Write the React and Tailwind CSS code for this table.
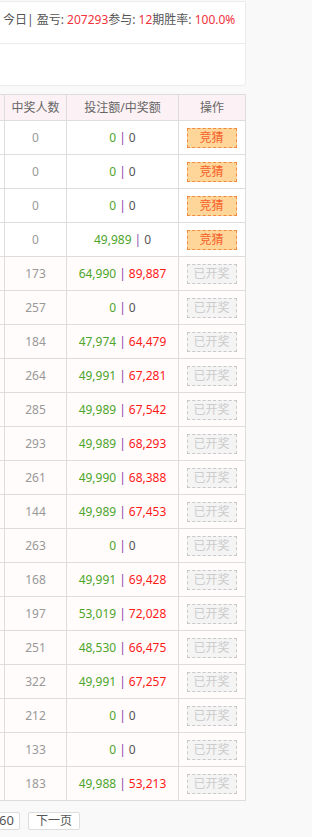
import React from "react";

const rows = [
  ["0", "0", "0", true],
  ["0", "0", "0", true],
  ["0", "0", "0", true],
  ["0", "49,989", "0", true],
  ["173", "64,990", "89,887"],
  ["257", "0", "0"],
  ["184", "47,974", "64,479"],
  ["264", "49,991", "67,281"],
  ["285", "49,989", "67,542"],
  ["293", "49,989", "68,293"],
  ["261", "49,990", "68,388"],
  ["144", "49,989", "67,453"],
  ["263", "0", "0"],
  ["168", "49,991", "69,428"],
  ["197", "53,019", "72,028"],
  ["251", "48,530", "66,475"],
  ["322", "49,991", "67,257"],
  ["212", "0", "0"],
  ["133", "0", "0"],
  ["183", "49,988", "53,213"],
];

export default function App() {
  return (
    <div className="min-h-screen bg-[#f9f9f9] font-['Noto_Sans','Noto_Sans_CJK_SC',sans-serif] text-[12px] overflow-hidden">
      <div className="w-[246px]">
        <div className="mt-px bg-white border-t border-r border-b border-[#ececec] rounded-br-[4px]">
          <div className="h-[42px] border-b border-[#ececec] pt-[9px] pl-[3px] leading-[18px] text-[#555] whitespace-nowrap">
            今日| 盈亏: <span className="text-[#f0323c]">207293</span>参与: <span className="text-[#f0323c]">12</span>期胜率: <span className="text-[#f0323c]">100.0%</span>
          </div>
          <div className="h-[41px]"></div>
        </div>

        <div className="mt-[8px] grid grid-cols-[5px_62px_112px_67px] text-center">
          <div className="h-[27px] bg-[#fcf1f4] border-t border-b border-r border-[#dddddd]"></div>
          <div className="h-[27px] bg-[#fcf1f4] border-t border-b border-r border-[#dddddd] flex items-center justify-center text-[#666]">中奖人数</div>
          <div className="h-[27px] bg-[#fcf1f4] border-t border-b border-r border-[#dddddd] flex items-center justify-center text-[#666]">投注额/中奖额</div>
          <div className="h-[27px] bg-[#fcf1f4] border-t border-b border-r border-[#dddddd] flex items-center justify-center text-[#666]">操作</div>
          {rows.map((r, i) => {
            const open = r[3];
            const bg = open ? "bg-white" : "bg-[#fffcfb]";
            return (
              <React.Fragment key={i}>
                <div className={`h-[34px] border-b border-r border-[#dddddd] ${bg}`}></div>
                <div className={`h-[34px] border-b border-r border-[#dddddd] ${bg} flex items-center justify-center text-[#999]`}>{r[0]}</div>
                <div className={`h-[34px] border-b border-r border-[#dddddd] ${bg} flex items-center justify-center whitespace-nowrap`}>
                  <span className="text-[#4ea52a]">{r[1]}</span>
                  <span className="text-[#8e44ad] mx-[3px]">|</span>
                  <span className={r[2] === "0" ? "text-[#555]" : "text-[#ff1a1a]"}>{r[2]}</span>
                </div>
                <div className={`h-[34px] border-b border-r border-[#dddddd] ${bg} flex items-center justify-center`}>
                  {open ? (
                    <span className="w-[50px] h-[20px] flex items-center justify-center bg-[#ffd699] border border-dashed border-[#f0893c] text-[#f5602a] ml-[-1px]">竞猜</span>
                  ) : (
                    <span className="w-[50px] h-[20px] flex items-center justify-center bg-[#f4f4f4] border border-dashed border-[#c8c8c8] text-[#cccccc] ml-[-1px]">已开奖</span>
                  )}
                </div>
              </React.Fragment>
            );
          })}
        </div>

        <div className="mt-[11px] flex items-center gap-[8px] ml-[-7px]">
          <span className="h-[18px] px-[5px] flex items-center bg-white border border-[#dddddd] rounded-[2px] text-[#555] text-[13px]">60</span>
          <span className="h-[18px] px-[7px] flex items-center bg-white border border-[#dddddd] rounded-[2px] text-[#555] text-[12px]">下一页</span>
        </div>
      </div>
    </div>
  );
}
